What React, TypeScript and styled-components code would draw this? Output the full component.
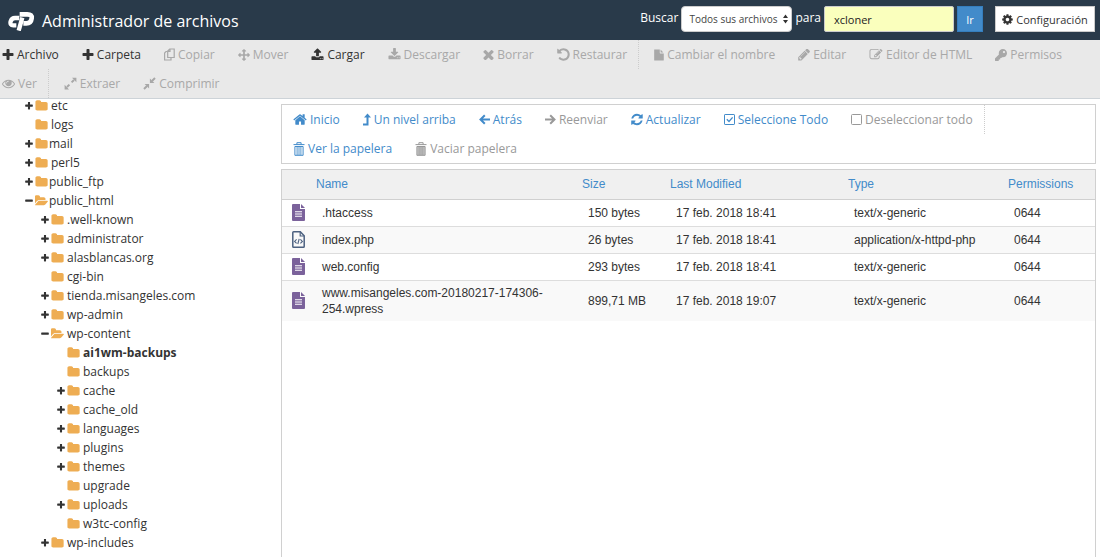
import React from "react";
import styled, { createGlobalStyle, css } from "styled-components";
import { FaKey } from "react-icons/fa";

const uiFont = '"Open Sans", "Noto Sans", sans-serif';
const dataFont = '"Liberation Sans", Arial, sans-serif';

const color = {
  navy: "#293a4a",
  bar: "#e9e9e9",
  text: "#333333",
  muted: "#a8a8a8",
  disabled: "#999999",
  blue: "#428bca",
  border: "#cccccc",
  folder: "#eead53",
  violet: "#7b629b",
};

const GlobalStyle = createGlobalStyle`
  * { box-sizing: border-box; }
  body { margin: 0; background: #ffffff; color: ${color.text}; font: 12px/18px ${uiFont}; }
  button, input, select { font-family: inherit; }
`;

const Page = styled.div`
  display: flex;
  flex-direction: column;
  height: 100vh;
  overflow: hidden;
`;

const Header = styled.header`
  display: flex;
  align-items: flex-start;
  justify-content: space-between;
  flex: none;
  height: 40px;
  padding: 6px 5px 0 8px;
  background: ${color.navy};
  color: #ffffff;
`;

const Brand = styled.h1`
  display: flex;
  align-items: center;
  gap: 7px;
  margin: 0;
  padding-top: 4px;
  font-size: 16px;
  line-height: 22px;
  font-weight: 400;
`;

const SearchForm = styled.form`
  display: flex;
  align-items: center;
  gap: 3px;
  height: 26px;
`;

const SearchLabel = styled.label`
  padding-bottom: 2px;
  line-height: 18px;
`;

const SelectWrap = styled.span`
  position: relative;
  display: block;
  width: 111px;
`;

const ScopeSelect = styled.select`
  display: block;
  width: 100%;
  height: 26px;
  padding: 0 0 0 7px;
  appearance: none;
  border: 1px solid ${color.border};
  border-radius: 4px;
  background: #ffffff;
  color: #444444;
  font-size: 10px;
`;

const SortArrows = styled.svg`
  position: absolute;
  top: 8px;
  right: 4px;
  width: 5px;
  height: 10px;
  pointer-events: none;
  fill: ${color.text};
`;

const SearchInput = styled.input`
  width: 130px;
  height: 26px;
  padding: 0 9px;
  border: 1px solid ${color.border};
  border-radius: 2px;
  background: #faffbd;
  color: #222222;
  font-size: 11px;
`;

const HeaderButton = styled.button<{ $primary?: boolean }>`
  display: flex;
  align-items: center;
  justify-content: center;
  gap: 3px;
  height: 26px;
  border: 1px solid ${(p) => (p.$primary ? "#357ebd" : color.border)};
  background: ${(p) => (p.$primary ? color.blue : "#ffffff")};
  color: ${(p) => (p.$primary ? "#ffffff" : color.text)};
  width: ${(p) => (p.$primary ? "26px" : "100px")};
  margin-left: ${(p) => (p.$primary ? "0" : "9px")};
  padding: 0;
  font-size: 11px;
  cursor: pointer;
`;

const Toolbar = styled.nav`
  display: flex;
  flex: none;
  flex-wrap: wrap;
  padding-left: 2px;
  border-bottom: 1px solid #cdd3d8;
  background: ${color.bar};
`;

const Tool = styled.button<{ $last?: boolean; $tone?: "blue" }>`
  display: flex;
  align-items: center;
  gap: 3px;
  height: 29px;
  padding: 0;
  border: 0;
  margin: 0 23px 0 0;
  background: none;
  color: ${(p) => (p.$tone === "blue" ? color.blue : color.text)};
  font-size: 12px;
  line-height: 18px;
  white-space: nowrap;
  cursor: pointer;

  &:disabled {
    color: ${(p) => (p.$tone === "blue" ? color.disabled : color.muted)};
    cursor: default;
  }

  ${(p) =>
    p.$last &&
    css`
      padding-right: 11px;
      margin-right: 15px;
      border-right: 1px dotted #cccccc;
    `}
`;

const Body = styled.div`
  display: flex;
  flex: 1;
  min-height: 0;
`;

const Sidebar = styled.aside`
  flex: none;
  width: 281px;
`;

const TreeList = styled.ul`
  margin: -3px 0 0;
  padding: 0 0 0 25px;
  list-style: none;
`;

const TreeRow = styled.li<{ $level: number; $bold?: boolean }>`
  display: flex;
  align-items: center;
  gap: 2px;
  height: 19px;
  padding-left: ${(p) => p.$level * 16}px;
  font-weight: ${(p) => (p.$bold ? 700 : 400)};
`;

const TreeToggle = styled.button`
  display: flex;
  align-items: center;
  width: 8px;
  height: 14px;
  padding: 0;
  border: 0;
  background: none;
  color: ${color.text};
`;

const ToggleSpace = styled.span`
  width: 8px;
`;

const TreeLink = styled.a<{ $tight?: boolean }>`
  display: flex;
  align-items: center;
  gap: ${(p) => (p.$tight ? 1 : 3)}px;
  color: ${color.text};
  text-decoration: none;
  white-space: nowrap;
`;

const Main = styled.main`
  display: flex;
  flex: 1;
  flex-direction: column;
  gap: 5px;
  min-width: 0;
  padding: 5px 4px 0 0;
`;

const Actions = styled.div`
  display: flex;
  flex: none;
  flex-wrap: wrap;
  padding-left: 11px;
  border: 1px solid #d0d0d0;
`;

const TablePane = styled.section`
  flex: 1;
  border: 1px solid #d0d0d0;
  border-bottom: 0;
`;

const FileTable = styled.table`
  width: 100%;
  table-layout: fixed;
  border-collapse: collapse;
  font-family: ${dataFont};
  font-size: 12px;
  line-height: 16px;
`;

const Th = styled.th`
  height: 29px;
  padding: 0;
  border-bottom: 1px solid #d0d0d0;
  background: #f0f0f0;
  color: ${color.blue};
  font-weight: 400;
  text-align: left;
`;

const Tr = styled.tr`
  &:nth-child(even) {
    background: #f9f9f9;
  }
  & + & {
    border-top: 1px solid #dddddd;
  }
`;

const Td = styled.td<{ $icon?: boolean }>`
  height: 27px;
  padding: ${(p) => (p.$icon ? "0 0 0 10px" : "4px 6px")};
  color: ${color.text};
  line-height: 16px;
  overflow-wrap: break-word;

  svg {
    display: block;
  }
`;

/* ---------- icons ---------- */

type GlyphProps = { d: string; w?: number; h?: number; box?: string; fill?: string };

const Glyph = ({ d, w = 13, h = 13, box = "0 0 1792 1792", fill = "currentColor" }: GlyphProps) => (
  <svg width={w} height={h} viewBox={box} fill={fill} aria-hidden="true">
    <path d={d} />
  </svg>
);

const P = {
  plus: "M1600 736v192q0 40-28 68t-68 28h-416v416q0 40-28 68t-68 28h-192q-40 0-68-28t-28-68v-416h-416q-40 0-68-28t-28-68v-192q0-40 28-68t68-28h416v-416q0-40 28-68t68-28h192q40 0 68 28t28 68v416h416q40 0 68 28t28 68z",
  minus: "M1600 736v192q0 40-28 68t-68 28h-1216q-40 0-68-28t-28-68v-192q0-40 28-68t68-28h1216q40 0 68 28t28 68z",
  folder: "M1728 608v704q0 92-66 158t-158 66h-1216q-92 0-158-66t-66-158v-960q0-92 66-158t158-66h320q92 0 158 66t66 158v32h672q92 0 158 66t66 158z",
  folderOpen: "M1815 952q0 31-31 66l-336 396q-43 51-120.5 86.5t-143.5 35.5h-1088q-34 0-60.5-13t-26.5-43q0-31 31-66l336-396q43-51 120.5-86.5t143.5-35.5h1088q34 0 60.5 13t26.5 43zm-343-344v160h-832q-94 0-197 47.5t-164 119.5l-337 396-5 6q0-4-.5-12.5t-.5-12.5v-960q0-92 66-158t158-66h320q92 0 158 66t66 158v32h544q92 0 158 66t66 158z",
  upload: "M1344 1472q0-26-19-45t-45-19-45 19-19 45 19 45 45 19 45-19 19-45zm256 0q0-26-19-45t-45-19-45 19-19 45 19 45 45 19 45-19 19-45zm128-224v320q0 40-28 68t-68 28h-1472q-40 0-68-28t-28-68v-320q0-40 28-68t68-28h427q21 56 70.5 92t110.5 36h256q61 0 110.5-36t70.5-92h427q40 0 68 28t28 68zm-325-648q-17 40-59 40h-256v448q0 26-19 45t-45 19h-256q-26 0-45-19t-19-45v-448h-256q-42 0-59-40-17-39 14-69l448-448q18-19 45-19t45 19l448 448q31 30 14 69z",
  download: "M1344 1344q0-26-19-45t-45-19-45 19-19 45 19 45 45 19 45-19 19-45zm256 0q0-26-19-45t-45-19-45 19-19 45 19 45 45 19 45-19 19-45zm128-224v320q0 40-28 68t-68 28h-1472q-40 0-68-28t-28-68v-320q0-40 28-68t68-28h465l135 136q58 56 136 56t136-56l136-136h464q40 0 68 28t28 68zm-325-569q17 41-14 70l-448 448q-18 19-45 19t-45-19l-448-448q-31-29-14-70 17-39 59-39h256v-448q0-26 19-45t45-19h256q26 0 45 19t19 45v448h256q42 0 59 39z",
  times: "M1490 1322q0 40-28 68l-136 136q-28 28-68 28t-68-28l-294-294-294 294q-28 28-68 28t-68-28l-136-136q-28-28-28-68t28-68l294-294-294-294q-28-28-28-68t28-68l136-136q28-28 68-28t68 28l294 294 294-294q28-28 68-28t68 28l136 136q28 28 28 68t-28 68l-294 294 294 294q28 28 28 68z",
  undo: "M1664 896q0 156-61 298t-164 245-245 164-298 61q-172 0-327-72.5t-264-204.5q-7-10-6.5-22.5t8.5-20.5l137-138q10-9 25-9 16 2 23 12 73 95 179 147t225 52q104 0 198.5-40.5t163.5-109.5 109.5-163.5 40.5-198.5-40.5-198.5-109.5-163.5-163.5-109.5-198.5-40.5q-98 0-188 35.5t-160 101.5l137 138q31 30 14 69-17 40-59 40h-448q-26 0-45-19t-19-45v-448q0-42 40-59 39-17 69 14l130 129q107-101 244.5-156.5t284.5-55.5q156 0 298 61t245 164 164 245 61 298z",
  arrows: "M1792 896q0 26-19 45l-256 256q-19 19-45 19t-45-19-19-45v-128h-384v384h128q26 0 45 19t19 45-19 45l-256 256q-19 19-45 19t-45-19l-256-256q-19-19-19-45t19-45 45-19h128v-384h-384v128q0 26-19 45t-45 19-45-19l-256-256q-19-19-19-45t19-45l256-256q19-19 45-19t45 19 19 45v128h384v-384h-128q-26 0-45-19t-19-45 19-45l256-256q19-19 45-19t45 19l256 256q19 19 19 45t-19 45-45 19h-128v384h384v-128q0-26 19-45t45-19 45 19l256 256q19 19 19 45z",
  eye: "M1664 960q-152-236-381-353 61 104 61 225 0 185-131.5 316.5t-316.5 131.5-316.5-131.5-131.5-316.5q0-121 61-225-229 117-381 353 133 205 333.5 326.5t434.5 121.5 434.5-121.5 333.5-326.5zm-720-384q0-20-14-34t-34-14q-125 0-214.5 89.5t-89.5 214.5q0 20 14 34t34 14 34-14 14-34q0-86 61-147t147-61q20 0 34-14t14-34zm848 384q0 34-20 69-140 230-376.5 368.5t-499.5 138.5-499.5-139-376.5-368q-20-35-20-69t20-69q140-229 376.5-368t499.5-139 499.5 139 376.5 368q20 35 20 69z",
  pencil: "M491 1536l91-91-235-235-91 91v107h128v128h107zm523-928q0-22-22-22-10 0-17 7l-542 542q-7 7-7 17 0 22 22 22 10 0 17-7l542-542q7-7 7-17zm-54-192l416 416-832 832h-416v-416zm683 96q0 53-37 90l-166 166-416-416 166-165q36-38 90-38 53 0 91 38l235 234q37 39 37 91z",
  file: "M1152 512v-472q22 14 36 28l408 408q14 14 28 36h-472zm-128 32q0 40 28 68t68 28h544v1056q0 40-28 68t-68 28h-1344q-40 0-68-28t-28-68v-1600q0-40 28-68t68-28h800v544z",
  edit: "M888 1184l116-116-152-152-116 116v56h96v96h56zm440-720q-16-16-33 1l-350 350q-17 17-1 33t33-1l350-350q17-17 1-33zm80 594v190q0 119-84.5 203.5t-203.5 84.5h-832q-119 0-203.5-84.5t-84.5-203.5v-832q0-119 84.5-203.5t203.5-84.5h832q63 0 117 25 15 7 18 23 3 17-9 29l-49 49q-14 14-32 8-23-6-45-6h-832q-66 0-113 47t-47 113v832q0 66 47 113t113 47h832q66 0 113-47t47-113v-126q0-13 9-22l64-64q15-15 35-7t20 29zm-96-738l288 288-672 672h-288v-288zm444 132l-92 92-288-288 92-92q28-28 68-28t68 28l152 152q28 28 28 68t-28 68z",
  home: "M1472 992v480q0 26-19 45t-45 19h-384v-384h-256v384h-384q-26 0-45-19t-19-45v-480q0-1 .5-3t.5-3l575-474 575 474q1 2 1 6zm223-69l-62 74q-8 9-21 11h-3q-13 0-21-7l-692-577-692 577q-12 8-24 7-13-2-21-11l-62-74q-8-10-7-23.5t11-21.5l719-599q32-26 76-26t76 26l244 204v-195q0-14 9-23t23-9h192q14 0 23 9t9 23v408l219 182q10 8 11 21.5t-7 23.5z",
  refresh: "M1639 1056q0 5-1 7-64 268-268 434.5t-478 166.5q-146 0-282.5-55t-243.5-157l-129 129q-19 19-45 19t-45-19-19-45v-448q0-26 19-45t45-19h448q26 0 45 19t19 45-19 45l-137 137q71 66 161 102t187 36q134 0 250-65t186-179q11-17 53-117 8-23 30-23h192q13 0 22.5 9.5t9.5 22.5zm25-800v448q0 26-19 45t-45 19h-448q-26 0-45-19t-19-45 19-45l138-138q-148-137-349-137-134 0-250 65t-186 179q-11 17-53 117-8 23-30 23h-199q-13 0-22.5-9.5t-9.5-22.5v-7q65-268 270-434.5t480-166.5q146 0 284 55.5t245 156.5l130-129q19-19 45-19t45 19 19 45z",
  cog: "M1152 896q0-106-75-181t-181-75-181 75-75 181 75 181 181 75 181-75 75-181zm512-109v222q0 12-8 23t-20 13l-185 28q-19 54-39 91 35 50 107 138 10 12 10 25t-9 23q-27 37-99 108t-94 71q-12 0-26-9l-138-108q-44 23-91 38-16 136-29 186-7 28-36 28h-222q-14 0-24.5-8.5t-11.5-21.5l-28-184q-49-16-90-37l-141 107q-10 9-25 9-14 0-25-11-126-114-165-168-7-10-7-23 0-12 8-23 15-21 51-66.5t54-70.5q-27-50-41-99l-183-27q-13-2-21-12.5t-8-23.5v-222q0-12 8-23t19-13l186-28q14-46 39-92-40-57-107-138-10-12-10-24 0-10 9-23 26-36 98.5-107.5t94.5-71.5q13 0 26 10l138 107q44-23 91-38 16-136 29-186 7-28 36-28h222q14 0 24.5 8.5t11.5 21.5l28 184q49 16 90 37l142-107q9-9 24-9 13 0 25 10 129 119 165 170 7 8 7 22 0 12-8 23-15 21-51 66.5t-54 70.5q26 50 41 98l183 28q13 2 21 12.5t8 23.5z",
};

const Line = ({ w, h = 13, sw = 1, children }: { w: number; h?: number; sw?: number; children: React.ReactNode }) => (
  <svg width={w} height={h} viewBox={`0 0 ${w} ${h}`} fill="none" stroke="currentColor" strokeWidth={sw} aria-hidden="true">
    {children}
  </svg>
);

const CopyIcon = () => (
  <Line w={11} sw={1.2}>
    <path d="M3.7 9.5V3L5.7 1H10.2V9.5zM3.7 3.4H6V1" />
    <path d="M3.5 3.5H2L.6 5V12H7V9.6" />
  </Line>
);
const ExpandIcon = () => (
  <Line w={13} sw={2}>
    <path d="M7.6 5.4L10 3M5.4 7.6L3 10" />
    <path d="M8 .8H12.4V5.2zM.6 7.8V12.4H5z" fill="currentColor" stroke="none" />
  </Line>
);
const CompressIcon = () => (
  <Line w={13} sw={2}>
    <path d="M9 4L12 1M4 9L1 12" />
    <path d="M6.9 1.6V6.1H11.4zM1.6 6.9H6.1V11.4z" fill="currentColor" stroke="none" />
  </Line>
);
const LevelUpIcon = () => (
  <Line w={8} sw={2}>
    <path d="M0 11.5H4.5V3.5" />
    <path d="M4.5 .4L8 4.6H1z" fill="currentColor" stroke="none" />
  </Line>
);
const BackIcon = () => (
  <Line w={11} sw={2}>
    <path d="M11 6.5H1.6M5.8 2.2L1.5 6.5L5.8 10.8" />
  </Line>
);
const ForwardIcon = () => (
  <Line w={11} sw={2}>
    <path d="M0 6.5H9.4M5.2 2.2L9.5 6.5L5.2 10.8" />
  </Line>
);
const CheckedIcon = () => (
  <Line w={11}>
    <rect x=".5" y="1.5" width="10" height="10" rx=".6" />
    <path d="M2.8 6.3L5 8.5L8.6 4.4" strokeWidth="1.3" />
  </Line>
);
const UncheckedIcon = () => (
  <Line w={11}>
    <rect x=".5" y="1.5" width="10" height="10" rx="1" />
  </Line>
);
const TrashIcon = ({ full }: { full?: boolean }) => (
  <Line w={12} h={14}>
    <path d="M.5 2.6H11.5M3.9 2.4V.7H8.1V2.4" />
    <path d="M1.9 4.5H10.1V13.3H1.9z" fill={full ? "currentColor" : "none"} fillOpacity={full ? 0.55 : undefined} />
    <path d="M4.1 5V13M6 5V13M7.9 5V13" strokeWidth=".9" />
  </Line>
);

const TextFileIcon = () => (
  <svg width="13" height="17" viewBox="0 0 13 17" aria-label="text">
    <path d="M1 0H8V5H13V16Q13 17 12 17H1Q0 17 0 16V1Q0 0 1 0z" fill={color.violet} />
    <path d="M9 0L13 4H9z" fill={color.violet} />
    <path d="M3 7.8H10M3 10H10M3 12.2H10" stroke="#ffffff" strokeWidth="1.1" />
  </svg>
);
const CodeFileIcon = () => (
  <svg width="13" height="17" viewBox="0 0 13 17" fill="none" stroke="#4c6180" aria-label="php">
    <path d="M1.6 .8H8.3L12.2 4.8V15.4Q12.2 16.2 11.4 16.2H1.6Q.8 16.2 .8 15.4V1.6Q.8 .8 1.6 .8z" strokeWidth="1.5" />
    <path d="M8.2 1V5H12" strokeWidth="1.2" />
    <path d="M4.6 8.4L2.6 10.4L4.6 12.4M8.4 8.4L10.4 10.4L8.4 12.4M7.2 7.8L5.8 13" strokeWidth="1.1" />
  </svg>
);

const Logo = () => (
  <svg width="27" height="20" viewBox="0 0 81 60" fill="none" stroke="#ffffff" aria-label="cPanel">
    <path d="M34 21H21Q11 21 8 31Q5 43 16 43H25" strokeWidth="13" />
    <path d="M32 59L43 20" strokeWidth="13" />
    <path d="M35 10H58Q73 10 71 22Q69 37 55 37H46" strokeWidth="14" />
  </svg>
);

/* ---------- data ---------- */

type ToolItem = { label: string; icon: React.ReactNode; enabled?: boolean; last?: boolean };

const tools: ToolItem[] = [
  { label: "Archivo", icon: <Glyph d={P.plus} w={12} h={12} box="128 128 1536 1536" />, enabled: true },
  { label: "Carpeta", icon: <Glyph d={P.plus} w={12} h={12} box="128 128 1536 1536" />, enabled: true },
  { label: "Copiar", icon: <CopyIcon /> },
  { label: "Mover", icon: <Glyph d={P.arrows} w={12} h={12} /> },
  { label: "Cargar", icon: <Glyph d={P.upload} />, enabled: true },
  { label: "Descargar", icon: <Glyph d={P.download} /> },
  { label: "Borrar", icon: <Glyph d={P.times} w={11} h={11} box="256 256 1280 1280" /> },
  { label: "Restaurar", icon: <Glyph d={P.undo} w={13} h={13} box="100 100 1600 1600" />, last: true },
  { label: "Cambiar el nombre", icon: <Glyph d={P.file} w={10} h={12} box="100 0 1600 1792" /> },
  { label: "Editar", icon: <Glyph d={P.pencil} w={12} h={12} box="100 230 1560 1460" /> },
  { label: "Editor de HTML", icon: <Glyph d={P.edit} w={14} h={13} /> },
  { label: "Permisos", icon: <FaKey size={12} /> },
  { label: "Ver", icon: <Glyph d={P.eye} w={13} h={13} />, last: true },
  { label: "Extraer", icon: <ExpandIcon /> },
  { label: "Comprimir", icon: <CompressIcon /> },
];

const actions: ToolItem[] = [
  { label: "Inicio", icon: <Glyph d={P.home} w={14} h={13} box="64 100 1664 1600" />, enabled: true },
  { label: "Un nivel arriba", icon: <LevelUpIcon />, enabled: true },
  { label: "Atrás", icon: <BackIcon />, enabled: true },
  { label: "Reenviar", icon: <ForwardIcon /> },
  { label: "Actualizar", icon: <Glyph d={P.refresh} w={12} h={13} box="100 60 1600 1672" />, enabled: true },
  { label: "Seleccione Todo", icon: <CheckedIcon />, enabled: true },
  { label: "Deseleccionar todo", icon: <UncheckedIcon />, last: true },
  { label: "Ver la papelera", icon: <TrashIcon />, enabled: true },
  { label: "Vaciar papelera", icon: <TrashIcon full /> },
];

type Folder = { name: string; level: number; state?: "closed" | "open"; tight?: boolean; current?: boolean };

const folders: Folder[] = [
  { name: "etc", level: 0, state: "closed" },
  { name: "logs", level: 0 },
  { name: "mail", level: 0, state: "closed", tight: true },
  { name: "perl5", level: 0, state: "closed" },
  { name: "public_ftp", level: 0, state: "closed", tight: true },
  { name: "public_html", level: 0, state: "open", tight: true },
  { name: ".well-known", level: 1, state: "closed" },
  { name: "administrator", level: 1, state: "closed" },
  { name: "alasblancas.org", level: 1, state: "closed" },
  { name: "cgi-bin", level: 1 },
  { name: "tienda.misangeles.com", level: 1, state: "closed" },
  { name: "wp-admin", level: 1, state: "closed" },
  { name: "wp-content", level: 1, state: "open" },
  { name: "ai1wm-backups", level: 2, current: true },
  { name: "backups", level: 2 },
  { name: "cache", level: 2, state: "closed" },
  { name: "cache_old", level: 2, state: "closed" },
  { name: "languages", level: 2, state: "closed" },
  { name: "plugins", level: 2, state: "closed" },
  { name: "themes", level: 2, state: "closed" },
  { name: "upgrade", level: 2 },
  { name: "uploads", level: 2, state: "closed" },
  { name: "w3tc-config", level: 2 },
  { name: "wp-includes", level: 1, state: "closed" },
];

const files = [
  { name: ".htaccess", size: "150 bytes", date: "17 feb. 2018 18:41", type: "text/x-generic", perm: "0644" },
  { name: "index.php", size: "26 bytes", date: "17 feb. 2018 18:41", type: "application/x-httpd-php", perm: "0644" },
  { name: "web.config", size: "293 bytes", date: "17 feb. 2018 18:41", type: "text/x-generic", perm: "0644" },
  { name: "www.misangeles.com-20180217-174306-254.wpress", size: "899,71 MB", date: "17 feb. 2018 19:07", type: "text/x-generic", perm: "0644" },
];

const ToolButtons = ({ items, tone }: { items: ToolItem[]; tone?: "blue" }) => (
  <>
    {items.map((t) => (
      <Tool key={t.label} type="button" disabled={!t.enabled} $last={t.last} $tone={tone}>
        {t.icon}
        {t.label}
      </Tool>
    ))}
  </>
);

const Col = styled.col<{ $width: number }>`
  width: ${(p) => p.$width}px;
`;

export default function App() {
  return (
    <Page>
      <GlobalStyle />
      <Header>
        <Brand>
          <Logo />
          Administrador de archivos
        </Brand>
        <SearchForm onSubmit={(e) => e.preventDefault()}>
          <SearchLabel htmlFor="scope">Buscar</SearchLabel>
          <SelectWrap>
            <ScopeSelect id="scope">
              <option>Todos sus archivos</option>
            </ScopeSelect>
            <SortArrows viewBox="0 0 5 10" aria-hidden="true">
              <path d="M0 4L2.5 .5L5 4zM0 6H5L2.5 9.5z" />
            </SortArrows>
          </SelectWrap>
          <SearchLabel htmlFor="query">para</SearchLabel>
          <SearchInput id="query" type="text" defaultValue="xcloner" />
          <HeaderButton type="submit" $primary>
            Ir
          </HeaderButton>
          <HeaderButton type="button">
            <Glyph d={P.cog} w={11} h={11} box="100 100 1600 1600" />
            Configuración
          </HeaderButton>
        </SearchForm>
      </Header>
      <Toolbar aria-label="Herramientas">
        <ToolButtons items={tools} />
      </Toolbar>
      <Body>
        <Sidebar>
          <TreeList>
            {folders.map((f) => (
              <TreeRow key={f.name} $level={f.level} $bold={f.current}>
                {f.state ? (
                  <TreeToggle type="button" aria-label={f.name}>
                    <Glyph d={f.state === "open" ? P.minus : P.plus} w={8} h={8} box="160 160 1472 1472" />
                  </TreeToggle>
                ) : (
                  <ToggleSpace />
                )}
                <TreeLink href="#" $tight={f.tight}>
                  <Glyph
                    d={f.state === "open" ? P.folderOpen : P.folder}
                    w={13}
                    h={11}
                    box={f.state === "open" ? "0 100 1830 1500" : "40 100 1700 1500"}
                    fill={color.folder}
                  />
                  {f.name}
                </TreeLink>
              </TreeRow>
            ))}
          </TreeList>
        </Sidebar>
        <Main>
          <Actions>
            <ToolButtons items={actions} tone="blue" />
          </Actions>
          <TablePane>
            <FileTable>
              <colgroup>
                <Col $width={34} />
                <col />
                <Col $width={88} />
                <Col $width={178} />
                <Col $width={160} />
                <Col $width={87} />
              </colgroup>
              <thead>
                <tr>
                  <Th aria-label="Icon" />
                  <Th>Name</Th>
                  <Th>Size</Th>
                  <Th>Last Modified</Th>
                  <Th>Type</Th>
                  <Th>Permissions</Th>
                </tr>
              </thead>
              <tbody>
                {files.map((f) => (
                  <Tr key={f.name}>
                    <Td $icon>{f.name.endsWith(".php") ? <CodeFileIcon /> : <TextFileIcon />}</Td>
                    <Td>{f.name}</Td>
                    <Td>{f.size}</Td>
                    <Td>{f.date}</Td>
                    <Td>{f.type}</Td>
                    <Td>{f.perm}</Td>
                  </Tr>
                ))}
              </tbody>
            </FileTable>
          </TablePane>
        </Main>
      </Body>
    </Page>
  );
}
